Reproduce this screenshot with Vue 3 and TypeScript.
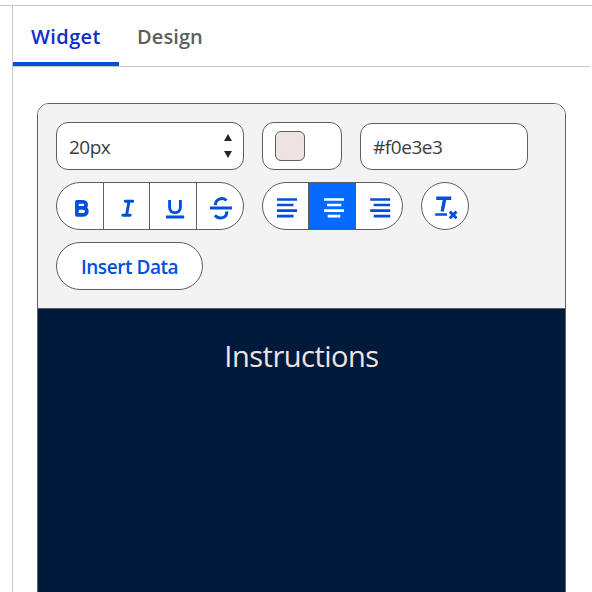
<script setup lang="ts">
import { ref } from 'vue'

type Align = 'left' | 'center' | 'right'

const tabs = ['Widget', 'Design']
const activeTab = ref('Widget')
const fontSize = ref('20px')
const color = ref('#f0e3e3')
const align = ref<Align>('center')

const alignments: { id: Align; path: string }[] = [
  { id: 'left', path: 'M14 16.5h20M14 22h16.5M14 27.7h20M14 33.2h16.5' },
  { id: 'center', path: 'M15 16.5h20M18 22h14.3M15 27.7h20M18.7 33.2h12.6' },
  { id: 'right', path: 'M14.2 16.5h20M17.7 22h16.5M14.2 27.7h20M17.7 33.2h16.5' },
]
</script>

<template>
  <div class="page">
    <main class="sidebar">
      <nav class="tabs">
        <button
          v-for="tab in tabs"
          :key="tab"
          class="tab"
          :class="{ active: tab === activeTab }"
          @click="activeTab = tab"
        ><span :class="'label-' + tab.toLowerCase()">{{ tab }}</span></button>
      </nav>
      <section class="editor">
        <div class="toolbar">
          <div class="row">
            <div class="field size">
              <span class="size-text">{{ fontSize }}</span>
              <svg class="arrows" width="8" height="24" viewBox="0 0 8 24">
                <path d="M0 7L4 0L8 7ZM0 17H8L4 24Z" fill="#252525" />
              </svg>
            </div>
            <div class="field picker"><span class="swatch"></span></div>
            <div class="field hex"><span class="hex-text">{{ color }}</span></div>
          </div>
          <div class="row">
            <div class="group formats">
              <button class="cell">
                <svg width="46" height="46" viewBox="0 0 46 46">
                  <path d="M19.9 18.8H26C30.2 18.8 30.2 24.9 26 24.9H19.9ZM19.9 24.9H26.4C31 24.9 31 31.8 26.4 31.8H19.9Z" stroke-width="3.7" stroke-linejoin="round" />
                </svg>
              </button>
              <button class="cell">
                <svg width="45" height="46" viewBox="0 0 45 46">
                  <path d="M21.2 18.2H28.8M18.8 32.2H26.2M25 18.2L22.6 32.2" stroke-width="2.9" stroke-linecap="round" />
                </svg>
              </button>
              <button class="cell">
                <svg width="46" height="46" viewBox="0 0 46 46">
                  <path d="M19.6 17V24.3C19.6 31.4 30.4 31.4 30.4 24.3V17M16 34H34.2" stroke-width="2.9" />
                </svg>
              </button>
              <button class="cell">
                <svg width="46" height="46" viewBox="0 0 46 46">
                  <path d="M13 25H35M18.4 22.3C18.4 16 25 13.8 29.6 17.4M17.8 32.4C22.5 37.2 30.3 35 29.8 28.3" stroke-width="3" />
                </svg>
              </button>
            </div>
            <div class="group aligns">
              <button
                v-for="item in alignments"
                :key="item.id"
                class="cell"
                :class="{ selected: item.id === align }"
                @click="align = item.id"
              >
                <svg width="46" height="46" viewBox="0 0 46 46">
                  <path :d="item.path" stroke-width="2.7" />
                </svg>
              </button>
            </div>
            <button class="clear">
              <svg width="46" height="46" viewBox="0 0 46 46">
                <path d="M14.2 15.3H29.2M22.8 15.3L20.2 28.5" stroke-width="3.4" />
                <path d="M13.2 31.5H25" stroke-width="2.6" />
                <path d="M27.8 28.6L34.5 35.3M34.5 28.6L27.8 35.3" stroke-width="2.9" />
              </svg>
            </button>
          </div>
          <div class="row">
            <button class="insert"><span>Insert Data</span></button>
          </div>
        </div>
        <div class="canvas"><p>Instructions</p></div>
      </section>
    </main>
  </div>
</template>

<style>
body {
  background: #fff;
  overflow: hidden;
}
</style>

<style scoped>
.page {
  box-sizing: border-box;
  height: 592px;
  padding: 5px 0 0 12px;
  overflow: hidden;
  font-family: 'Open Sans', 'Noto Sans', sans-serif;
  background: #fff;
}
.page * {
  box-sizing: border-box;
}
.page::before {
  content: '';
  position: absolute;
  top: 5px;
  left: 0;
  width: 100%;
  height: 1px;
  background: #c8c8c8;
}
.sidebar {
  height: 587px;
  border-left: 1px solid #c8c8c8;
}
button {
  margin: 0;
  padding: 0;
  border: 0;
  font: inherit;
  background: none;
}
.tabs {
  display: flex;
  width: 577px;
  height: 62px;
  padding-top: 1px;
  background: linear-gradient(#c8c8c8, #c8c8c8) 0 100% / 100% 1px no-repeat;
}
.tab {
  width: 106px;
  height: 60px;
  padding: 6px 0 0 18px;
  border-bottom: 4px solid transparent;
  color: #5e5e5e;
  font-size: 20px;
  font-weight: 550;
  line-height: 50px;
  text-align: left;
}
.tab.active {
  color: #0a30c8;
  border-color: #0250d9;
}
.tab span,
.size-text,
.hex-text,
.insert span,
.canvas p {
  white-space: nowrap;
}
.label-widget {
  letter-spacing: 0.4px;
}
.label-design {
  letter-spacing: 0.1px;
}
.editor {
  width: 529px;
  height: 500px;
  margin: 36px 0 0 24px;
  border: 1px solid #5e5e5e;
  border-radius: 12px;
  overflow: hidden;
}
.toolbar {
  display: flex;
  flex-direction: column;
  gap: 12px;
  height: 205px;
  padding: 18px;
  background: #f3f3f3;
  border-bottom: 1px solid #5e5e5e;
}
.row {
  display: flex;
  align-items: flex-end;
  gap: 18px;
  height: 48px;
}
.field {
  display: flex;
  align-items: center;
  height: 48px;
  padding: 0 12px;
  border: 1px solid #5e5e5e;
  border-radius: 12px;
  background: #fff;
  color: #3c3c3c;
  font-size: 19px;
}
.size {
  width: 188px;
  justify-content: space-between;
  padding-right: 11px;
}
.size-text {
  padding-top: 2px;
  letter-spacing: -0.5px;
}
.picker {
  width: 80px;
}
.swatch {
  width: 30px;
  height: 30px;
  border: 1px solid #5e5e5e;
  border-radius: 6px;
  background: #f0e3e3;
}
.hex {
  width: 168px;
  height: 47px;
}
.hex-text {
  padding-top: 1px;
  letter-spacing: -0.45px;
}
.group {
  display: grid;
  height: 48px;
  border: 1px solid #5e5e5e;
  border-radius: 24px;
  background: #fff;
  overflow: hidden;
}
.formats {
  grid-template-columns: 46px 46px 47px 47px;
}
.aligns {
  grid-template-columns: 45px 47px 47px;
}
.cell {
  min-width: 0;
  height: 46px;
  overflow: hidden;
}
.cell + .cell {
  border-left: 1px solid #5e5e5e;
}
.cell svg,
.clear svg {
  display: block;
  fill: none;
  stroke: #0250d9;
}
.cell.selected {
  background: #066afe;
}
.cell.selected svg {
  stroke: #fff;
}
.clear {
  width: 48px;
  height: 48px;
  border: 1px solid #5e5e5e;
  border-radius: 50%;
  background: #fff;
}
.insert {
  width: 147px;
  height: 48px;
  padding-top: 2px;
  border: 1px solid #5e5e5e;
  border-radius: 24px;
  background: #fff;
  color: #0250d9;
  font-size: 19px;
  font-weight: 550;
}
.insert span {
  letter-spacing: -0.45px;
}
.canvas {
  height: 293px;
  padding-top: 26px;
  background: #001a3b;
  color: #f0e3e3;
  text-align: center;
}
.canvas p {
  margin: 0;
  font-size: 29px;
  line-height: 42px;
  letter-spacing: -0.5px;
}
</style>
